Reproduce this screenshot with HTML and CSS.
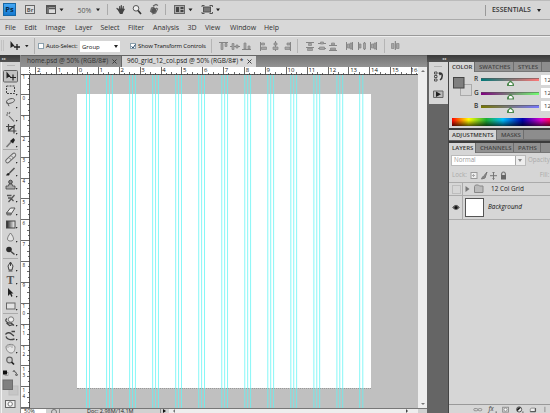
FILE: index.html
```html
<!DOCTYPE html>
<html lang="en">
<head>
<meta charset="utf-8">
<title>Image editor</title>
<link rel="stylesheet" href="styles.css">
</head>
<body>
<div class="app">
  <header class="appbar">
    <span class="logo">Ps</span>
    <svg class="bar-icons" width="210" height="19" viewBox="20 0 210 19">
      <rect x="25.500" y="5.500" width="9" height="8" fill="#ddd" stroke="#666"/>
      <text x="26.800" y="12" font-size="5.800" font-weight="bold" fill="#555">Br</text>
      <rect x="46.500" y="5.500" width="9" height="8" fill="#ddd" stroke="#555"/>
      <path d="M46 6.500h10M48 6v8M49 8.500h7" stroke="#555" stroke-width="1.500"/>
      <path d="M59.500 8.500h4l-2 2.800zM96 8.500h4l-2 2.800zM188.500 8.500h4l-2 2.800zM216 8.500h4l-2 2.800z" fill="#222"/>
      <text x="77.500" y="12.600" font-size="7" fill="#555">50%</text>
      <path d="M107.500 4v11M165.500 4v11" stroke="#aaa"/>
      <path d="M118.500 10l-1.500-1.500M119.700 9V6.500M121.300 9V5.500M123 9l.3-2.500" stroke="#444" stroke-width="1.200" stroke-linecap="round"/>
      <path d="M118.500 8.500h5l1.500.5-1.500 2.500-1 2.500h-2.500l-2-3.500z" fill="#444"/>
      <circle cx="136" cy="8.300" r="2.800" fill="#eee" stroke="#555"/>
      <path d="M138 10.500l3 3.500" stroke="#333" stroke-width="1.700"/>
      <path d="M150.500 12l1-4 3-1M153 6l3-1.500 2 1M156 8l1.500 1-2 4-3.500 1" fill="none" stroke="#666" stroke-width="1.200"/>
      <path d="M151.500 9l2-1.500 2.500 1v3l-2 2-3-1z" fill="#555"/>
      <rect x="174.500" y="5.500" width="10" height="8" fill="#aaa" stroke="#666"/>
      <path d="M176 7h3v5h-3zM180.500 7h3v2h-3zM180.500 10h3v2h-3z" fill="#444"/>
      <rect x="203.500" y="7" width="7" height="5" fill="#777" stroke="#555"/>
      <path d="M202 7V5.500h2.500M209.500 5.500h3V7M202 12v1.500h2.500M209.500 13.500h3V12" fill="none" stroke="#555"/>
    </svg>
    <span class="workspace-name">ESSENTIALS <i class="caret"></i></span>
  </header>

  <nav class="menubar">
    <span>File</span><span>Edit</span><span>Image</span><span>Layer</span><span>Select</span><span>Filter</span><span>Analysis</span><span>3D</span><span>View</span><span>Window</span><span>Help</span>
  </nav>

  <div class="options">
    <svg class="move" width="35" height="18" viewBox="0 0 35 18">
      <path d="M1.500 3v11M3.500 3v11" stroke="#c2c2c2"/>
      <path d="M10.500 4v7l2-1.500 2.500 0z" fill="#222"/>
      <path d="M17 7v6M14 10h6" stroke="#222" stroke-width="1.300"/>
      <path d="M25 8h3.500l-1.700 2.300z" fill="#222"/>
      <path d="M34.500 1v16" stroke="#b0b0b0"/>
    </svg>
    <i class="check"></i><span class="opt auto">Auto-Select:</span>
    <span class="combo">Group<i class="caret"></i></span>
    <i class="check on"><svg width="5" height="5" viewBox="0 0 5 5"><path d="M.6 2.300l1.400 1.700 2.400-3.500" fill="none" stroke="#246" stroke-width="1"/></svg></i><span class="opt show">Show Transform Controls</span>
    <svg class="align" width="195" height="18" viewBox="208 36 195 18">
      <path d="M211.500 38v14M297.500 38v14M384.500 38v14" stroke="#b5b5b5"/>
      <g fill="none" stroke="#858585">
        <path d="M219 41.500h9M242 48.500h9M230 45.500h10M260.500 41v9M275.500 40v10M290.500 41v9"/>
        <path d="M306 41.500h8M306 46.500h8M318 42.500h8M318 47.500h8M329 44.500h8M329 49.500h8M346.500 41v8M352.500 41v8M358.500 41v8M364.500 41v8M370.500 41v8M376.500 41v8"/>
      </g>
      <g fill="#a5a5a5" stroke="#858585" stroke-width=".7">
        <path d="M221 42.500h2v6h-2zM225 42.500h2v3h-2zM232 42.500h2v6h-2zM236 44h2v3h-2zM244 42h2v6h-2zM248 45h2v3h-2zM261.500 42h3v2h-3zM261.500 46h5v2.500h-5zM274 42h3v2h-3zM273 46h5v2.500h-5zM287 42h3v2h-3zM285 46h5v2.500h-5z"/>
        <path d="M308.500 42.500h3v2h-3zM307.500 47.500h5v2h-5zM320.500 41h3v2h-3zM319.500 46h5v2.500h-5zM331.500 42h3v2h-3zM330.500 47h5v2h-5zM347.500 43h2v4h-2zM350 42h2v6h-2zM359 43h2v4h-2zM363.500 42h2v6h-2zM371.500 43h2v4h-2zM374 42h2v6h-2z"/>
        <path d="M391.500 42.500h2.500v5h-2.500zM396.500 42.500h2.500v5h-2.500z"/>
      </g>
      <path d="M395.300 40v9" stroke="#777"/>
    </svg>
  </div>

  <main class="work">
    <aside class="tools">
      <div class="tools-head">▸▸</div>
      <svg width="21" height="351" viewBox="0 62 21 351">
        <path d="M1.500 62v351" stroke="#f2f2f2"/>
        <path d="M7 65.500h8" stroke="#b5b5b5"/>
        <rect x="3.500" y="70.500" width="14" height="11.500" rx="1" fill="#c1c1c1" stroke="#626262"/>
        <path d="M6.500 71.500v7l2-1.500h2.500z" fill="#222"/><path d="M13 74.500v6M10 77.500h6" stroke="#222" stroke-width="1.200"/>
        <rect x="6.500" y="86" width="8" height="7.500" fill="none" stroke="#444" stroke-dasharray="2 1"/>
        <path d="M7.500 104c-3-3 1-5.500 5-5.500 4 .8 2 4.500-4 5l-1-.8 1.500 3.500" fill="none" stroke="#555"/>
        <path d="M7 112.500l1 1M6 115h2M10 112l-1 2M9 116l5 5.500" stroke="#666" stroke-width="1.100"/>
        <path d="M6 126.500h8v7M8.500 124v7h8M8.500 131l6.500-6" fill="none" stroke="#444" stroke-width="1.200"/>
        <path d="M6.500 147l5-5.500" stroke="#777" stroke-width="1.500"/><path d="M10 141l3 2.500 2-3.500-1.500-2z" fill="#222"/>
        <path d="M3 149.500h15M3 258.500h15M3 313.500h15" stroke="#aaa"/>
        <path d="M7.500 161l6.500-6" stroke="#666" stroke-width="4.500" stroke-linecap="round"/><path d="M7.500 161l6.500-6" stroke="#ddd" stroke-width="2.600" stroke-linecap="round"/><path d="M9.500 158l2 2M11.500 156l2 2" stroke="#777"/>
        <path d="M6 175.500c1-3 3-3 4-2l-1 2z" fill="#222"/><path d="M9.500 173l5-5" stroke="#555" stroke-width="1.600"/>
        <circle cx="10.500" cy="182" r="1.800" fill="#888" stroke="#444"/><path d="M9 184h3l.5 2h2.500v3H6v-3h2.500z" fill="#aaa" stroke="#444" stroke-width=".8"/>
        <path d="M8.500 202l6-7M7 195.500h4.500M8 198h2.500l3 3" fill="none" stroke="#555" stroke-width="1.300"/>
        <path d="M6.500 213l4-5h4.500l-3.500 5.500z" fill="#eee" stroke="#555"/><path d="M6.500 213h5l-.5 2H7z" fill="#888" stroke="#555" stroke-width=".7"/>
        <linearGradient id="gr"><stop stop-color="#222"/><stop offset="1" stop-color="#fff"/></linearGradient>
        <rect x="6.500" y="221" width="8.500" height="7" fill="url(#gr)" stroke="#444"/>
        <path d="M10.500 233c4 5 4 8 0 8s-4-3 0-8z" fill="#e4e4e4" stroke="#777"/>
        <circle cx="9" cy="249.500" r="2.800" fill="#2d2d2d"/><path d="M11 251.500l3.500 3" stroke="#444" stroke-width="1.400"/>
        <path d="M10.500 262v4M10.500 262l-2.500 4 1 4h3l1-4zM8.500 271h4" fill="#ddd" stroke="#444"/>
        <text x="6.500" y="283.500" font-family="Liberation Serif" font-size="11.500" font-weight="bold" fill="#555">T</text>
        <path d="M8 288v8l2-2 1.500 3 1-1-1.200-2.500h2.200z" fill="#222"/>
        <rect x="6.500" y="303" width="8.500" height="6" fill="#e2e2e2" stroke="#666"/>
        <circle cx="11" cy="319.500" r="2.700" fill="#eee" stroke="#777"/><path d="M7 318.500c-3 2 0 5 4 4.500l3 2.500M6.500 323l3 2.500 4-1" fill="none" stroke="#444" stroke-width="1.200"/>
        <path d="M5.500 334.500c1-2 4-2.500 6-.5l2.500 2M6 336.500c1 3 5 3.500 8.500 2.500M11.500 331.500h3.500" fill="none" stroke="#444" stroke-width="1.400"/>
        <path d="M6 347c0-3 8-4 9 0 0 4-1.500 6-4 6s-5-3-5-6z" fill="#e4e4e4" stroke="#888"/><path d="M8 345v3M10 344v3M12 345v3" stroke="#888" stroke-width=".7"/>
        <circle cx="9.500" cy="360" r="2.800" fill="#ccc" stroke="#666" stroke-width="1.200"/><path d="M11.500 362l2.500 2.500" stroke="#222" stroke-width="1.700"/>
        <path d="M16 95h1v-1zM16 108h1v-1zM16 121h1v-1zM16 134h1v-1zM16 147h1v-1zM16 163h1v-1zM16 176h1v-1zM16 189h1v-1zM16 202h1v-1zM16 215h1v-1zM16 228h1v-1zM16 242h1v-1zM16 255h1v-1zM16 271h1v-1zM16 284h1v-1zM16 297h1v-1zM16 310h1v-1zM16 326h1v-1zM16 340h1v-1zM16 353h1v-1z" stroke="#222" stroke-width=".6"/>
        <rect x="5" y="372.500" width="3" height="3" fill="#eee" stroke="#777" stroke-width=".6"/><rect x="3" y="370.500" width="4" height="4" fill="#111"/>
        <path d="M13.500 371.500c2 0 3 1 3 3M13 371.500l1.500-1.500M16.500 375.500l-1.500-1M16.500 375.500l1.500-1" fill="none" stroke="#444"/>
        <rect x="9" y="386" width="9" height="9" fill="#c6c6c6" stroke="#bdbdbd"/><rect x="3" y="380" width="9.500" height="9.500" fill="#808080" stroke="#6c6c6c"/>
        <rect x="5.500" y="400.500" width="9.500" height="7" fill="#eee" stroke="#666"/><circle cx="10.200" cy="404" r="2.200" fill="#fff" stroke="#777"/>
      </svg>
    </aside>

    <section class="document">
      <div class="tabs">
        <span class="tab idle">home.psd @ 50% (RGB/8#)<svg width="5" height="5" viewBox="0 0 5 5"><path d="M.5.500l4 4M4.500.500l-4 4" stroke="#3b3b3b"/></svg></span>
        <span class="tab active">960_grid_12_col.psd @ 50% (RGB/8#) *<svg width="5" height="5" viewBox="0 0 5 5"><path d="M.5.500l4 4M4.500.500l-4 4" stroke="#444"/></svg></span>
      </div>
      <div class="doc-grid">
        <div class="corner"></div>
        <div class="ruler-h" id="rulerH"></div>
        <div class="scroll-top"><i></i></div>
        <div class="ruler-v" id="rulerV"></div>
        <div class="canvas"><div class="page"></div><div class="guides" id="guides"></div></div>
        <div class="scroll-v"><i></i></div>
      </div>
      <div class="status"><span class="zoom">50%</span><span class="preview"><i></i></span><span class="info">Doc: 2.98M/14.1M</span><span class="arrow"><i></i></span><span class="hscroll"><b></b><i></i></span><span class="grip"></span></div>
    </section>

    <aside class="dock">
      <div class="dock-head">◂◂</div>
      <div class="dock-body">
        <div class="strip">
          <svg width="19" height="42" viewBox="429 62 19 42">
            <path d="M434 66.500h8" stroke="#b2b2b2"/>
            <path d="M434.500 72h2.500v2h-2.500zM434.500 75.500h2.500v2h-2.500zM434.500 79h2.500v2h-2.500z" fill="#ddd" stroke="#444" stroke-width=".9"/>
            <path d="M439 72.500l1.500 2.500M440 73c3 0 3 5 0 7" fill="none" stroke="#333" stroke-width="1.500"/>
            <path d="M433.500 91h9.500v6.500h-9.500z" fill="#bbb" stroke="#666"/><path d="M436 91.500l5 2.800-5 2.800z" fill="#222"/>
          </svg>
        </div>
        <div class="panels">
          <section class="panel">
            <div class="ptabs"><span class="on w1">COLOR</span><span class="w2">SWATCHES</span><span class="w3">STYLES</span></div>
            <div class="color">
              <svg class="swatch" width="26" height="46" viewBox="448 72 26 46"><rect x="460.500" y="84.500" width="11" height="11" fill="#d5d5d5" stroke="#aaa"/><rect x="453.500" y="77.500" width="10.500" height="10.500" fill="#7f7f7f" stroke="#444"/></svg>
              <div class="sliders">
                <div class="slider"><span>R</span><i class="r"></i><b>12</b></div>
                <div class="slider"><span>G</span><i class="g"></i><b>12</b></div>
                <div class="slider"><span>B</span><i class="b"></i><b>12</b></div>
              </div>
            </div>
            <div class="spectrum"></div>
          </section>
          <section class="panel adjust"><div class="ptabs"><span class="on w4">ADJUSTMENTS</span><span class="w5">MASKS</span></div></section>
          <section class="panel layers">
            <div class="ptabs"><span class="on w6">LAYERS</span><span class="w7">CHANNELS</span><span class="w8">PATHS</span></div>
            <div class="blend"><span class="mode">Normal<i class="caret"></i></span><span>Opacity:</span></div>
            <div class="lock"><span>Lock:</span>
              <svg width="40" height="11" viewBox="470 169 40 11"><rect x="472" y="171.500" width="6" height="6" fill="#eee" stroke="#999"/><path d="M474 173h1v1h1v1h-1v1h-1v-1h-1v-1h1z" fill="#aaa"/><path d="M482.500 178c1-3 3-3 5.500-7l-2 6z" fill="#888" stroke="#777"/><path d="M494.500 171v7.500M491 174.700h7M493.500 172l1-1 1 1M493.500 177.500l1 1 1-1" fill="none" stroke="#777"/><path d="M502.500 174c0-4 4-4 4 0" fill="none" stroke="#777" stroke-width="1.200"/><rect x="502" y="174" width="5" height="4.500" fill="#666"/></svg>
              <span class="fill">Fill:</span></div>
            <div class="layer group"><span class="eye"><i></i></span>
              <svg width="27" height="12" viewBox="464 183 27 12"><path d="M466.500 186l4 3-4 3z" fill="#777"/><path d="M475.500 186.500l1-1.500h3l1 1h3.500v6.500h-8.500z" fill="#bbb" stroke="#888"/></svg><span>12 Col Grid</span></div>
            <div class="layer back"><span class="eye"><svg width="8" height="7" viewBox="0 0 10 8"><path d="M1 4c2-3.500 6-3.500 8 0-2 3-6 3-8 0z" fill="#777" stroke="#333"/><circle cx="5" cy="4" r="2" fill="#111"/></svg></span><i class="thumb"></i><em>Background</em></div>
            <div class="layer-space"></div>
            <svg class="footer" width="102" height="9" viewBox="448 404 102 9">
              <rect x="469.500" y="408" width="4.500" height="2.500" rx="1.200" fill="none" stroke="#888"/><rect x="474.500" y="408" width="4" height="2.500" rx="1.200" fill="none" stroke="#888"/>
              <text x="486" y="411" font-size="7" font-style="italic" font-weight="600" fill="#666">fx</text><path d="M494 412h1.500" stroke="#333"/>
              <rect x="502" y="406.500" width="6.500" height="5.500" fill="#ddd" stroke="#888"/><circle cx="505.200" cy="409.200" r="1.800" fill="#fff" stroke="#888"/>
              <circle cx="520.500" cy="409" r="2.900" fill="#eee" stroke="#444"/><path d="M518.500 411a2.900 2.900 0 0 1 4-4z" fill="#222"/><path d="M524 412h1.500" stroke="#333"/>
              <path d="M533 408.500l1-1h4.500v4H533z" fill="#eee" stroke="#888"/><path d="M533 411.500h6v-4" fill="none" stroke="#444"/><path d="M549.500 406v6" stroke="#888"/>
            </svg>
          </section>
        </div>
      </div>
    </aside>
  </main>
</div>
<script src="script.js"></script>
</body>
</html>
```
FILE: styles.css
```css
* { box-sizing: border-box; }
body { margin: 0; overflow: hidden; background: #d6d6d6; font: 7px/1 "Open Sans", "Noto Sans", sans-serif; color: #333; }
svg { display: block; flex: none; }
i { font-style: normal; }
.app { width: 550px; height: 413px; display: grid; grid-template-rows: 20px 16px 19px 358px; overflow: hidden; }
.caret { width: 0; height: 0; border: 2px solid transparent; border-top: 3px solid #222; border-bottom: 0; }

.appbar { display: flex; background: #d6d6d6; border-top: 1px solid #bbb; border-bottom: 1px solid #aaa; }
.logo { width: 13px; height: 13px; margin: 2px 3px 0 3px; background: linear-gradient(#45a8f5, #1479d0); border: 1px solid #1667a5; color: #082b48; font: bold 7.500px/11px "Open Sans", sans-serif; text-align: center; }
.bar-icons { margin-top: -1px; margin-left: 1px; }
.workspace-name { display: flex; align-items: center; gap: 6px; height: 11px; margin: 4px 0 0 255px; padding-left: 6px; border-left: 1px solid #999; font-size: 6.900px; font-weight: 600; color: #333; white-space: nowrap; }

.menubar { display: grid; grid-template-columns: 19.500px 21px 29.500px 25.500px 27.500px 25px 34.500px 17.500px 25px 34px 20px; padding-left: 5px; line-height: 15px; font-size: 7px; letter-spacing: -.05px; color: #333; background: #d8d8d8; border-bottom: 1px solid #999; }

.options { display: flex; align-items: center; background: #d6d6d6; border-top: 1px solid #eee; font-size: 6px; }
.move { margin-right: 3px; }
.check { width: 6px; height: 6px; flex: none; background: #fff; border: 1px solid #8ba0ad; display: flex; align-items: center; justify-content: center; }
.check svg { margin: -1px; }
.opt { flex: none; margin-left: 2px; white-space: nowrap; color: #111; font-weight: 500; letter-spacing: -.15px; }
.auto { width: 34px; }
.combo { display: flex; flex: none; align-items: center; justify-content: space-between; width: 40px; height: 11px; margin-top: 1px; padding: 0 2px; background: #fff; color: #111; }
.combo + .check.on { margin-left: 10px; }
.show { width: 71px; font-size: 6px; }
.align { margin-left: -1px; }

.work { display: grid; grid-template-columns: 21px 406px 123px; min-height: 0; }
.tools { background: #d3d3d3; overflow: hidden; border-right: 1px solid #8d8d8d; }
.tools-head, .dock-head { height: 7px; background: linear-gradient(#393939, #535353); color: #ddd; font: 4px/7px "DejaVu Sans", sans-serif; }
.tools-head { padding-left: 2px; }

.document { display: grid; grid-template-rows: 12px 341px 5px; min-width: 0; }
.tabs { display: flex; background: linear-gradient(#777, #939393); border-top: 1px solid #666; }
.tab { display: flex; align-items: center; justify-content: space-between; padding: 0 5px; font-size: 6.500px; white-space: nowrap; }
.idle { width: 101px; padding-left: 6px; padding-right: 4px; color: #333; background: linear-gradient(#838383, #929292); border-right: 1px solid #666; }
.active { width: 134px; padding-right: 4px; background: #d8d8d8; color: #222; }
.doc-grid { display: grid; grid-template: 8px 333px / 9px 388px 9px; background: #eee; }
.corner { background: #fff; border-right: 1px dotted #777; border-bottom: 1px solid #555; }
.ruler-h { background: #fff; border-bottom: 1px solid #555; }
.ruler-v { background: #fff; border-right: 1px solid #555; }
.ruler-h svg text { font: 500 6px "Open Sans", sans-serif; fill: #111; }
.ruler-v svg text { font: 500 4.500px "Open Sans", sans-serif; fill: #111; }
.scroll-top { display: flex; justify-content: center; background: #eee; padding-top: 3px; }
.scroll-top i { height: 2px; border: 2px solid transparent; border-bottom: 2px solid #777; border-top: 0; }
.canvas { position: relative; background: #c0c0c0; padding: 19px 0 0 47px; overflow: hidden; }
.page { width: 294px; height: 295px; background: #fff; border-bottom: 1px dotted #999; background-clip: padding-box; }
.guides { position: absolute; inset: 0; }
.scroll-v { display: flex; align-items: flex-end; justify-content: center; background: #eee; padding-bottom: 3px; }
.scroll-v i { border: 2px solid transparent; border-top: 2px solid #777; border-bottom: 0; }
.status { display: flex; background: #d1d1d1; border-top: 1px solid #777; font-size: 5.500px; line-height: 5px; color: #222; }
.status > span { flex: none; height: 4px; }
.zoom { width: 25px; padding-left: 3px; background: #fff; }
.preview { width: 14px; padding-left: 5px; border-right: 1px solid #888; }
.preview i { display: block; width: 6px; height: 6px; border: 1px solid #777; border-radius: 3px; }
.info { width: 101px; padding-left: 27px; white-space: nowrap; border-right: 1px solid #888; font-weight: 500; }
.arrow { width: 8px; padding-left: 2px; }
.arrow i { display: block; width: 0; border: 2px solid transparent; border-left: 3px solid #111; border-right: 0; }
.hscroll { width: 249px; display: flex; justify-content: space-between; background: #eee; padding: 0 8px 0 2px; }
.hscroll b, .hscroll i { border: 2px solid transparent; height: 4px; }
.hscroll b { border-right-color: #777; }
.hscroll i { border-left-color: #444; }
.grip { width: 9px; background: #d0d0d0; }

.dock { display: grid; grid-template-rows: 7px 351px; background: #656565; overflow: hidden; }
.dock-head { padding-left: 15px; }
.dock-body { display: grid; grid-template-columns: 21px 102px; }
.strip { padding-left: 2px; }
.strip svg { background: #d6d6d6; }
.panels { display: grid; grid-template-rows: 66px 13px 272px; border-left: 1px solid #444; min-width: 0; }
.panel { min-width: 0; background: #d6d6d6; overflow: hidden; }
.ptabs { display: flex; height: 10px; background: #8d8d8d; border-bottom: 1px solid #777; font-size: 6px; line-height: 10px; font-weight: 600; color: #444; }
.ptabs span { flex: none; padding-left: 4px; background: #919191; border-right: 1px solid #6d6d6d; white-space: nowrap; }
.ptabs .on { padding-left: 3px; background: #d6d6d6; color: #333; height: 10px; }
.w1 { width: 26px; } .w2 { width: 39px; } .w3 { width: 28px; }
.w4 { width: 48px; } .w5 { width: 27px; }
.w6 { width: 27px; } .w7 { width: 38px; } .w8 { width: 27px; }
.color { display: flex; height: 46px; overflow: hidden; }
.swatch { margin-left: -1px; }
.sliders { padding-top: 1px; }
.slider { display: grid; grid-template-columns: 7px 58px 12px; align-items: center; height: 13.400px; font-size: 6.500px; font-weight: 600; }
.slider i { position: relative; height: 3px; border-top: 1px solid #5558; }
.slider i::after { content: ""; position: absolute; left: 26px; top: 1px; width: 7px; height: 6px; background: #4f8a50; clip-path: polygon(50% 0, 100% 60%, 100% 100%, 0 100%, 0 60%); }
.slider i::before { content: ""; position: absolute; z-index: 1; left: 27.500px; top: 3px; width: 4px; height: 3px; background: #fff; clip-path: polygon(50% 0, 100% 50%, 100% 100%, 0 100%, 0 50%); }
.slider b { margin-left: 2px; height: 10px; padding-left: 3px; background: #fff; font-size: 6px; font-weight: 500; line-height: 11px; }
.r { background: linear-gradient(90deg, #007878, #ff7777); }
.g { background: linear-gradient(90deg, #800080, #70ff70); }
.b { background: linear-gradient(90deg, #777700, #7777ff); }
.spectrum { height: 8px; margin-left: 3px; background: linear-gradient(#fff0 0 25%, #000a), linear-gradient(90deg, #f00, #ff0 17%, #1dad35 35%, #0bf 52%, #00a 72%, #d0c 91%, #f05); }
.panel + .panel { border-top: 2px solid #3b3b3b; }
.panel.adjust { border-bottom: 1px solid #666; }
.layers { display: grid; grid-template-rows: 10px 15px 14px 13px 24px 1fr 9px; }
.blend { display: flex; align-items: center; gap: 2px; padding-left: 2px; color: #aaa; font-size: 6.200px; white-space: nowrap; }
.mode { display: flex; flex: none; align-items: center; justify-content: space-between; width: 75px; height: 11px; padding: 0 3px 0 2px; background: linear-gradient(90deg, #fff 63px, #aaa 63px 64px, #eee 64px); border: 1px solid #bbb; color: #999; }
.mode .caret { border-top-color: #888; }
.lock { display: flex; align-items: center; padding-left: 3px; color: #aaa; font-size: 6.200px; }
.lock svg { margin-left: 2px; }
.fill { margin-left: 31px; }
.layer { display: flex; align-items: center; border-top: 1px solid #ababab; color: #222; font-size: 6.400px; }
.eye { width: 13px; margin-left: 1px; align-self: stretch; display: flex; align-items: center; justify-content: center; border-right: 1px solid #aaa; }
.eye i { width: 9px; height: 9px; border: 1px solid #bdbdbd; }
.group span:last-child { margin-left: 1px; }
.thumb { width: 19px; height: 19px; margin: 0 4px 0 2px; background: #fff; border: 1px solid #555; }
.layer em { font-size: 6.400px; font-weight: 500; color: #111; }
.layer-space { border-top: 1px solid #aaa; }
.footer { border-top: 1px solid #999; }
```
FILE: script.js
```js
const UNIT = 20.88;

// Ruler marks: a full line with its number at each unit, shorter ticks between.
function ruler(horizontal) {
  const origin = horizontal ? 47.5 : 19.5;
  const depth = horizontal ? 8 : 9;
  const extent = horizontal ? 388 : 333;
  let path = "", labels = "";
  for (let n = -3; n <= 17; n++) {
    const start = origin + n * UNIT;
    for (let q = 0; q < 8; q++) {
      const at = Math.floor(start + q * UNIT / 8) + 0.5;
      if (at < 0 || at > extent) continue;
      const len = q === 0 ? depth : q === 4 ? 3 : q % 2 === 0 ? 2 : 1;
      path += horizontal ? `M${at} ${depth}v${-len}` : `M${depth} ${at}h${-len}`;
    }
    const value = Math.abs(n);
    if (start < -2 || start > extent - 7) continue;
    if (horizontal) labels += `<text x="${start + 1.2}" y="5.3">${value}</text>`;
    else String(value).split("").forEach((d, k) => {
      labels += `<text x="1.5" y="${start + 5 + k * 6.2}">${d}</text>`;
    });
  }
  // The last number sits just inside the ruler's right end.
  if (horizontal) labels += `<text x="380.5" y="5.3">16</text>`;
  const w = horizontal ? 388 : 9, h = horizontal ? 8 : 333;
  return `<svg width="${w}" height="${h}" viewBox="0 0 ${w} ${h}"><path d="${path}" stroke="#444" stroke-width=".8"/>${labels}</svg>`;
}

document.getElementById("rulerH").innerHTML = ruler(true);
document.getElementById("rulerV").innerHTML = ruler(false);

// Column guides: one pair at each outer margin, three lines at each gutter.
const lines = [56.5, 59.5, 329.7, 332.8];
for (let g = 0; g < 11; g++) {
  for (const d of [0, 2.9, 5.8]) lines.push(76.6 + g * 23.03 + d);
}
document.getElementById("guides").innerHTML =
  `<svg width="388" height="333"><path d="${lines.map(x => `M${x} 0v333`).join("")}" stroke="#5ff4f4" stroke-opacity=".75"/></svg>`;
```
